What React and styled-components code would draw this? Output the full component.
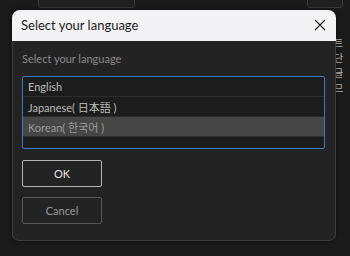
import React, { useState } from 'react'
import styled, { createGlobalStyle } from 'styled-components'

const GlobalStyle = createGlobalStyle`
  html, body {
    margin: 0;
    padding: 0;
    background: #1b1b1b;
    overflow: hidden;
  }
`

const languages = [
  { id: 'en', label: 'English' },
  { id: 'ja', label: 'Japanese( 日本語 )' },
  { id: 'ko', label: 'Korean( 한국어 )' },
]

const sideChars = ['트', '단', '글', '므']

const App = () => {
  const [selected, setSelected] = useState('ko')

  return (
    <Page>
      <GlobalStyle />
      <TopBar>
        <Stub $width={95} />
        <Stub $width={34} />
      </TopBar>
      <SideText>
        {sideChars.map((c, i) => (
          <SideChar key={i}>{c}</SideChar>
        ))}
      </SideText>

      <Dialog>
        <TitleBar>
          <Title>Select your language</Title>
          <CloseButton aria-label='close'>
            <svg width='12' height='12' viewBox='0 0 12 12'>
              <path d='M1 1 L11 11 M11 1 L1 11' stroke='#1a1a1a' strokeWidth='1.1' />
            </svg>
          </CloseButton>
        </TitleBar>
        <Body>
          <Label>Select your language</Label>
          <List>
            {languages.map((lang) => (
              <Row
                key={lang.id}
                $selected={selected === lang.id}
                onClick={() => setSelected(lang.id)}
              >
                {lang.label}
              </Row>
            ))}
          </List>
          <Buttons>
            <Button $primary>OK</Button>
            <Button>Cancel</Button>
          </Buttons>
        </Body>
      </Dialog>
    </Page>
  )
}

const Page = styled.div`
  position: relative;
  width: 350px;
  height: 256px;
  background: #1b1b1b;
  font-family: Lato, 'Noto Sans CJK KR', sans-serif;
`

const TopBar = styled.div`
  display: flex;
  justify-content: space-between;
  padding: 0 7px 0 38px;
  height: 6px;
`

const Stub = styled.div`
  width: ${(p) => p.$width}px;
  height: 16px;
  margin-top: -10px;
  border: 1px solid #3a3a3a;
  border-radius: 3px;
  background: #202020;
`

const SideText = styled.div`
  position: absolute;
  left: 334px;
  top: 35px;
  display: flex;
  flex-direction: column;
`

const SideChar = styled.span`
  display: block;
  font-family: 'Noto Sans CJK KR', sans-serif;
  font-size: 10px;
  line-height: 15px;
  color: #b8b8b8;
`

const Dialog = styled.div`
  position: absolute;
  z-index: 1;
  left: 12px;
  top: 10px;
  width: 324px;
  height: 231px;
  display: flex;
  flex-direction: column;
  border-radius: 8px;
  box-shadow: 0 0 6px rgba(0, 0, 0, 0.5);
`

const TitleBar = styled.div`
  height: 31px;
  flex-shrink: 0;
  display: flex;
  align-items: center;
  justify-content: space-between;
  padding: 0 9px 0 9px;
  background: #f3f3f5;
  border-radius: 8px 8px 0 0;
`

const Title = styled.div`
  font-size: 13px;
  color: #1a1a1a;
  padding-bottom: 1px;
`

const CloseButton = styled.div`
  display: flex;
  align-items: center;
  justify-content: center;
  width: 14px;
  height: 14px;
  margin-top: -2px;
`

const Body = styled.div`
  flex: 1;
  display: flex;
  flex-direction: column;
  padding: 11px 10px 0 9px;
  background: #232323;
  border: 1px solid #3c3c3c;
  border-top: none;
  border-radius: 0 0 7px 7px;
`

const Label = styled.div`
  font-size: 11px;
  line-height: 14px;
  color: #8a8a8a;
  margin-bottom: 10px;
`

const List = styled.div`
  height: 71px;
  border: 1px solid #3d79c1;
  border-radius: 2px;
  background: #1c1c1c;
  display: flex;
  flex-direction: column;
`

const Row = styled.div`
  height: 19px;
  flex-shrink: 0;
  display: flex;
  align-items: center;
  padding-left: 5px;
  font-size: 11px;
  white-space: pre;
  color: ${(p) => (p.$selected ? '#9c9c9c' : '#bdbdbd')};
  background: ${(p) => (p.$selected ? '#464646' : 'transparent')};
  border-bottom: 1px solid #2c2c2c;
  cursor: pointer;
`

const Buttons = styled.div`
  display: flex;
  flex-direction: column;
  gap: 10px;
  margin-top: 11px;
`

const Button = styled.div`
  width: 78px;
  height: 25px;
  display: flex;
  align-items: center;
  justify-content: center;
  font-size: 11px;
  color: ${(p) => (p.$primary ? '#e6e6e6' : '#9a9a9a')};
  border: 1px solid ${(p) => (p.$primary ? '#b4b4b4' : '#555555')};
  border-radius: 2px;
  background: #232323;
`

export default App
